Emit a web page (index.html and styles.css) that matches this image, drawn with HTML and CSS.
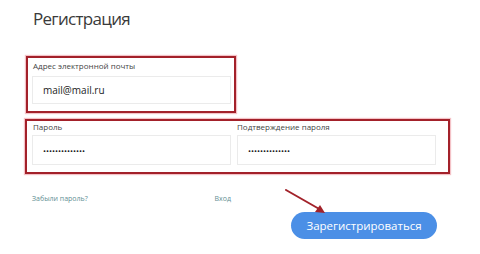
FILE: index.html
```html
<!DOCTYPE html>
<html lang="ru">
<head>
<meta charset="utf-8">
<title>Регистрация</title>
<link rel="stylesheet" href="styles.css">
</head>
<body>
<div class="page">
  <h1 class="title">Регистрация</h1>
  <div class="box box-email">
    <div class="label">Адрес электронной почты</div>
    <div class="input input-email">mail@mail.ru</div>
  </div>
  <div class="box box-pass">
    <div class="field">
      <div class="label">Пароль</div>
      <div class="input"><span class="dots">••••••••••••••</span></div>
    </div>
    <div class="field">
      <div class="label">Подтверждение пароля</div>
      <div class="input"><span class="dots">••••••••••••••</span></div>
    </div>
  </div>
  <div class="below">
    <div class="links">
      <a class="link">Забыли пароль?</a>
      <a class="link">Вход</a>
    </div>
    <button class="btn">Зарегистрироваться</button>
  </div>
  <svg class="arrow" width="50" height="32" viewBox="0 0 50 32">
    <line x1="1" y1="1" x2="36" y2="21" stroke="#a2222a" stroke-width="2" stroke-linecap="round"/>
    <polygon points="40,24 30,23 35,16" fill="#a2222a"/>
  </svg>
</div>
</body>
</html>
```
FILE: styles.css
```css
html, body {
  margin: 0;
  padding: 0;
  background: #ffffff;
}
body {
  font-family: "Open Sans", "Noto Sans", sans-serif;
  color: #333333;
  width: 480px;
  height: 254px;
  overflow: hidden;
}
.page {
  position: relative;
  padding-left: 25px;
  padding-top: 7px;
}
.title {
  margin: 0 0 0 8px;
  font-size: 17px;
  font-weight: 400;
  line-height: 24px;
  color: #3a3a3a;
  letter-spacing: -0.7px;
}
.box {
  border: 2px solid #a3212a;
  box-shadow: 0 0 1px 1px rgba(230, 120, 130, 0.45);
  box-sizing: border-box;
}
.box-email {
  margin-top: 25px;
  margin-left: 1px;
  width: 210px;
  height: 57px;
  padding: 3px 3px 0 4px;
}
.label {
  font-size: 8px;
  line-height: 10px;
  color: #444444;
  padding-left: 1px;
  white-space: nowrap;
}
.input {
  border: 1px solid #ebebeb;
  box-sizing: border-box;
  width: 199px;
  display: flex;
  align-items: center;
  padding-left: 10px;
  color: #222222;
}
.input-email {
  margin-top: 5px;
  height: 28px;
  font-size: 10px;
}
.box-pass {
  margin-top: 6px;
  width: 425px;
  height: 55px;
  padding: 1px 11px 0 5px;
  display: flex;
  gap: 6px;
}
.box-pass .field:last-child .label {
  padding-left: 0;
}
.box-pass .input {
  margin-top: 3px;
  height: 30px;
}
.dots {
  font-size: 8px;
  letter-spacing: 0;
  color: #1a1a1a;
  font-weight: 400;
}
.below {
  width: 405px;
  padding-left: 7px;
  display: flex;
  flex-direction: column;
}
.links {
  width: 199px;
  margin-top: 20px;
  display: flex;
  justify-content: space-between;
}
.link {
  font-size: 7px;
  line-height: 10px;
  color: #5f8f94;
}
.btn {
  align-self: flex-end;
  margin-top: 8px;
  width: 146px;
  height: 27px;
  border: none;
  border-radius: 14px;
  background: #4b8fe6;
  color: #ffffff;
  font-family: "Open Sans", "Noto Sans", sans-serif;
  font-size: 11.5px;
  padding: 0;
}
.arrow {
  position: absolute;
  left: 285px;
  top: 189px;
}
```
